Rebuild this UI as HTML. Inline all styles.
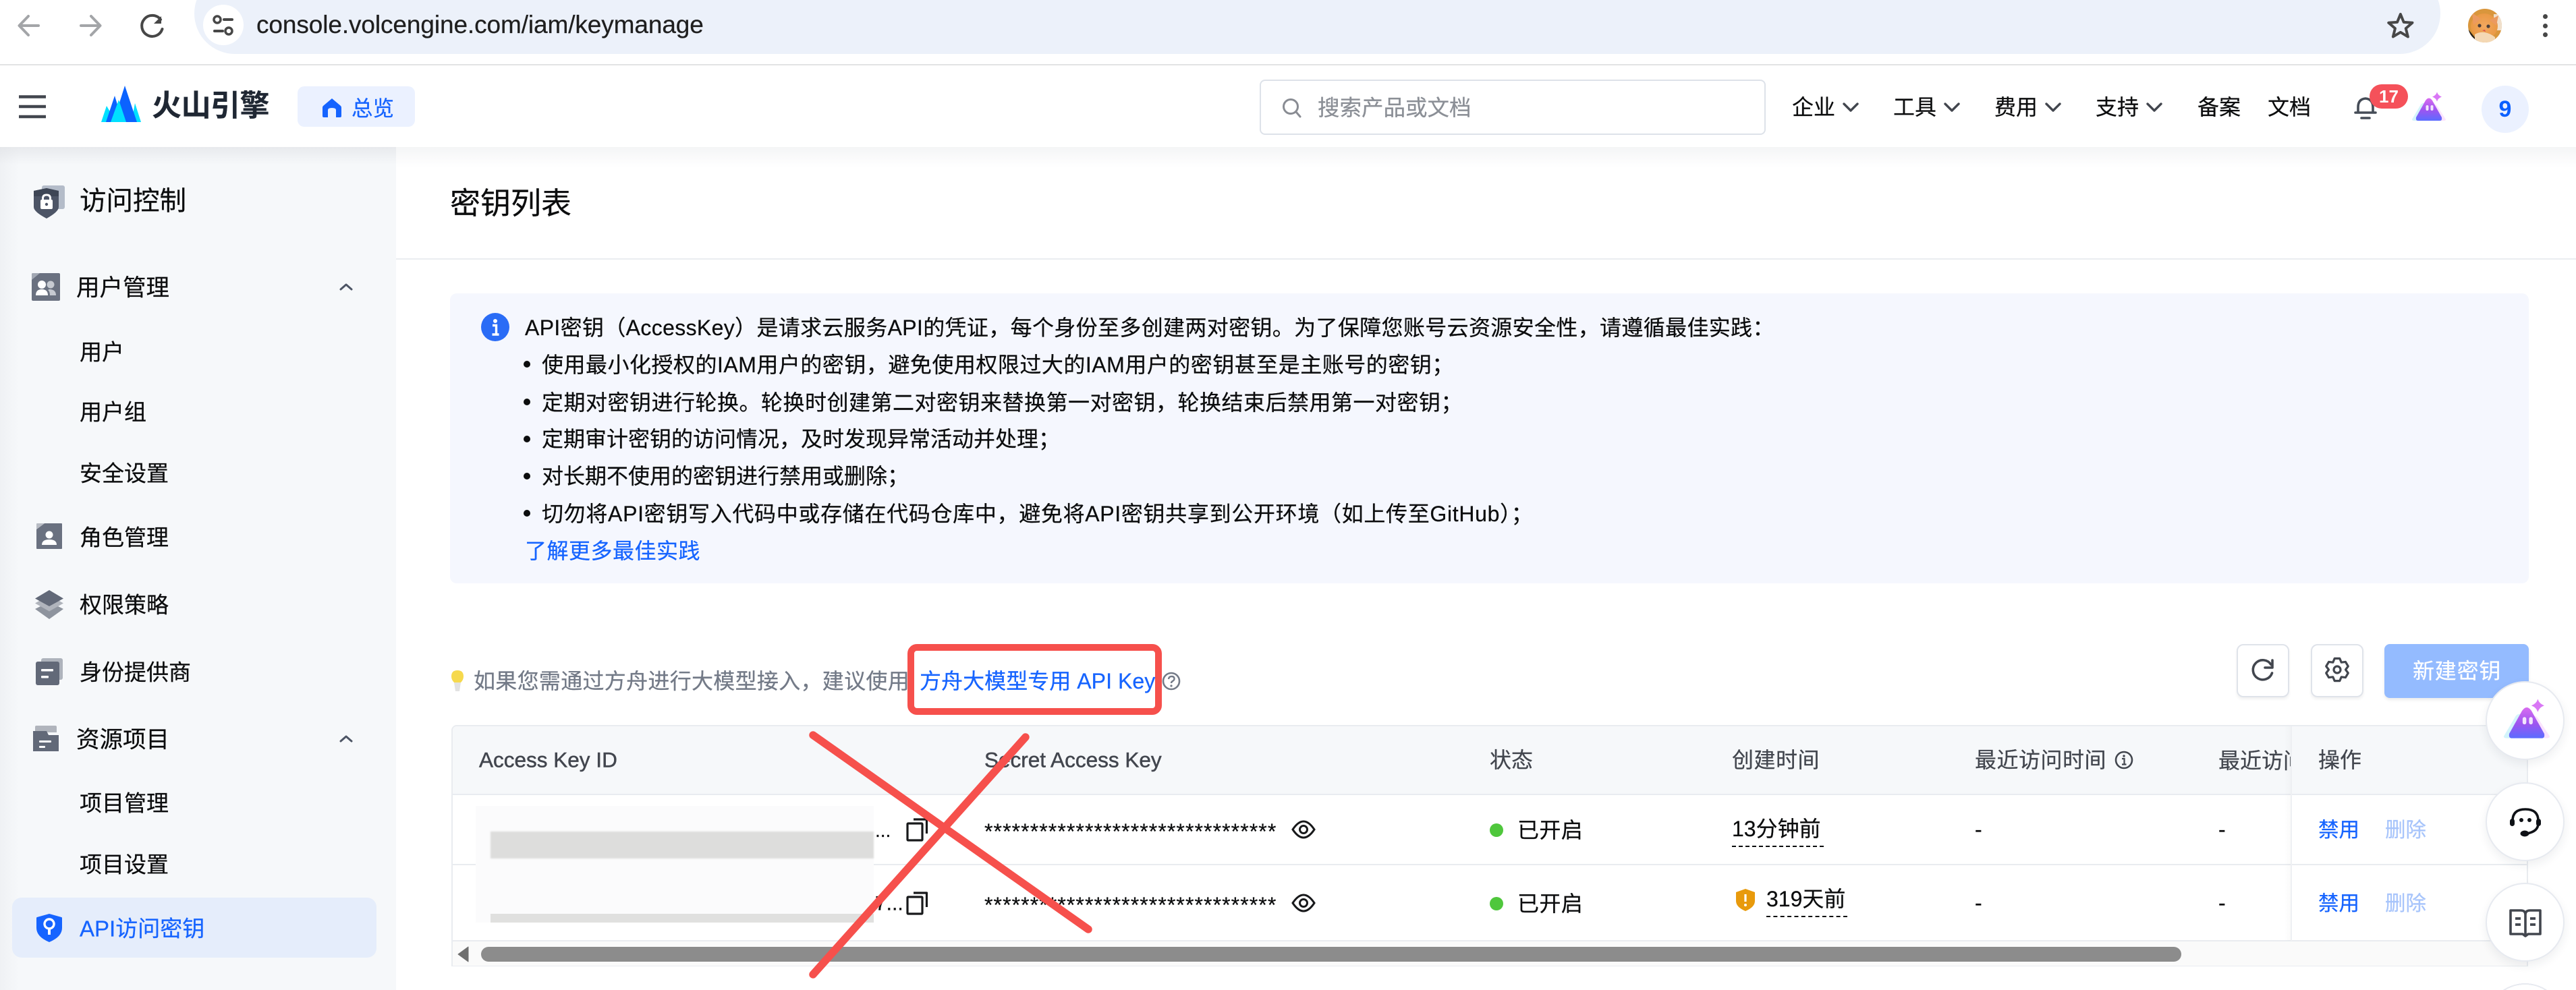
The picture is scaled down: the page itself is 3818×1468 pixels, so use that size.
<!DOCTYPE html>
<html lang="zh"><head><meta charset="utf-8"><title>密钥列表</title>
<style>
html,body{margin:0;padding:0;background:#fff;width:3818px;height:1468px;overflow:hidden}
#p{position:relative;width:3818px;height:1468px;overflow:hidden;background:#fff;font-family:"Liberation Sans","Noto Sans CJK SC",sans-serif;color:#0c0d0e}
.a{position:absolute}
.t{position:absolute;white-space:nowrap;transform:translateY(calc(-50% + 2px));line-height:1.3;-webkit-text-stroke:.25px currentColor}
.f32{font-size:32px}
svg{position:absolute;overflow:visible}
.b{color:#1664ff}
.g{color:#42464e}
.m{font-size:33px}
</style></head><body><div id="p">

<!-- browser bar -->
<div class="a" style="left:288px;top:-40px;width:3329px;height:120px;background:#ecf1fa;border-radius:60px"></div>
<div class="a" style="left:301px;top:7px;width:60px;height:60px;background:#fff;border-radius:50%"></div>
<svg style="left:0;top:0" width="400" height="80" fill="none" stroke-linecap="round" stroke-linejoin="round">
<path d="M57 38H29M42 24 28.500 38 42 52" stroke="#a3a5a8" stroke-width="4"/>
<path d="M120 38H148M135 24 148.500 38 135 52" stroke="#a3a5a8" stroke-width="4"/>
<path d="M238 29a15.500 15.500 0 1 0 2.500 14" stroke="#474747" stroke-width="4"/>
<path d="M239 24v11h-11z" fill="#474747"/>
<circle cx="322" cy="29" r="5" stroke="#474747" stroke-width="3.500"/><path d="M332 29h12M318 46h12" stroke="#474747" stroke-width="4"/><circle cx="339" cy="46" r="5" stroke="#474747" stroke-width="3.500"/>
</svg>
<div class="t" style="left:380px;top:35px;font-size:37px;color:#1f1f1f;letter-spacing:-.1px">console.volcengine.com/iam/keymanage</div>
<svg style="left:3536px;top:15px" width="44" height="44" fill="none"><path d="M22 4l5.500 13.500 14.500 1-11 9.500 3.500 14L22 34.500 9.500 42 13 28 2 18.500l14.500-1z" transform="translate(2.500 2.500) scale(.88)" stroke="#474747" stroke-width="4.500" stroke-linejoin="round"/></svg>
<svg style="left:3658px;top:13px" width="50" height="50" viewBox="0 0 50 50">
<defs><clipPath id="av"><circle cx="25" cy="25" r="25"/></clipPath><radialGradient id="cat" cx=".5" cy=".5" r=".6"><stop offset="0" stop-color="#f2a860"/><stop offset="1" stop-color="#e8963f"/></radialGradient></defs>
<g clip-path="url(#av)"><rect width="50" height="50" fill="#d9963c"/><rect x="38" y="8" width="12" height="24" fill="#f0e0cc"/><path d="M0 30l16 20H0z" fill="#252018"/><ellipse cx="24" cy="26" rx="20" ry="19" fill="url(#cat)"/><path d="M6 6l13 9-11 9zM45 10l-13 7 10 8z" fill="#eb9a60"/><path d="M10 38q14-8 30 4v10H10z" fill="#f4d8b4"/><circle cx="17" cy="25" r="2.600" fill="#4d3f3a"/><circle cx="30" cy="26" r="2.600" fill="#4d3f3a"/><path d="M21 32l4-1 1 3z" fill="#d8504a"/></g></svg>
<div class="a" style="left:3769px;top:20.500px;width:7px;height:7px;border-radius:50%;background:#474747"></div>
<div class="a" style="left:3769px;top:34.500px;width:7px;height:7px;border-radius:50%;background:#474747"></div>
<div class="a" style="left:3769px;top:48px;width:7px;height:7px;border-radius:50%;background:#474747"></div>
<div class="a" style="left:0;top:95px;width:3818px;height:2px;background:#e2e3e4"></div>

<!-- sidebar + main -->
<div class="a" style="left:0;top:218px;width:587px;height:1250px;background:linear-gradient(90deg,#eff1f4 0,#f6f8fa 28px)"></div>
<div class="a" style="left:587px;top:218px;width:3231px;height:30px;background:linear-gradient(#f4f5f6,#fff)"></div>
<div class="a" style="left:0;top:218px;width:587px;height:26px;background:linear-gradient(rgba(220,222,226,.55),rgba(246,248,250,0))"></div>

<!-- header -->
<svg style="left:28px;top:140px" width="40" height="36"><path d="M0 3.500h40M0 18h40M0 33h40" stroke="#42464e" stroke-width="4.400"/></svg>
<svg style="left:150px;top:128px" width="60" height="53" viewBox="0 0 60 53">
<path d="M0 53 8 29 22 53z" fill="#00e0ff"/><path d="M45 53 50 25 59 53z" fill="#00e0ff"/>
<path d="M7 53 20 14 32 53z" fill="#0b63ff"/><path d="M18 53 35 -1 53 53z" fill="#0b63ff"/>
<path d="M14 53 26 20 37 53z" fill="#00e0ff"/></svg>
<div class="t" style="left:225px;top:155px;font-size:44px;font-weight:700;color:#1f2733;letter-spacing:-.5px">火山引擎</div>
<div class="a" style="left:441px;top:128px;width:174px;height:60px;background:#ebf1ff;border-radius:10px"></div>
<svg style="left:478px;top:146px" width="28" height="28" viewBox="0 0 28 28"><path d="M14 0 27 11q1 1 1 3v12q0 2-2 2h-6V17q0-3-6-3t-6 3v11H2q-2 0-2-2V14q0-2 1-3z" fill="#1664ff"/></svg>
<div class="t b" style="left:521px;top:159px;font-size:31.500px">总览</div>

<div class="a" style="left:1867px;top:118px;width:746px;height:78px;border:2px solid #dde2e9;border-radius:8px;background:#fff"></div>
<svg style="left:1900px;top:144px" width="30" height="32" fill="none"><circle cx="13" cy="14" r="10.500" stroke="#898c93" stroke-width="3"/><path d="M21 22l6 7" stroke="#898c93" stroke-width="3" stroke-linecap="round"/></svg>
<div class="t" style="left:1953px;top:158px;font-size:32.500px;color:#8b8f96">搜索产品或文档</div>

<div class="t f32" style="left:2656px;top:158px;color:#0c0d0e">企业</div>
<div class="t f32" style="left:2806px;top:158px;color:#0c0d0e">工具</div>
<div class="t f32" style="left:2956px;top:158px;color:#0c0d0e">费用</div>
<div class="t f32" style="left:3106px;top:158px;color:#0c0d0e">支持</div>
<div class="t f32" style="left:3257px;top:158px;color:#0c0d0e">备案</div>
<div class="t f32" style="left:3361px;top:158px;color:#0c0d0e">文档</div>
<svg style="left:0;top:0" width="3400" height="200" fill="none" stroke="#42464e" stroke-width="3.400" stroke-linecap="round" stroke-linejoin="round"><path d="M2733 154l10 10 10-10M2883 154l10 10 10-10M3033 154l10 10 10-10M3183 154l10 10 10-10"/></svg>
<svg style="left:3489px;top:143px" width="34" height="36" fill="none" stroke="#454c57" stroke-linecap="round" stroke-width="3.600"><path d="M2 24h30M6 24V16Q6 4 17 3q11 1 11 13v8"/><path d="M11 32h12" stroke-width="3.600"/></svg>
<div class="a" style="left:3512px;top:125px;width:57px;height:36px;background:#f5515a;border-radius:18px;color:#fff;font-weight:700;font-size:26px;line-height:36px;text-align:center">17</div>

<svg style="left:3575px;top:136px" width="50" height="44" viewBox="0 0 50 44">
<defs><linearGradient id="pu" x1="0" y1="0" x2="0" y2="1"><stop offset="0" stop-color="#d86cf0"/><stop offset=".55" stop-color="#9b55f0"/><stop offset="1" stop-color="#5b6cff"/></linearGradient></defs>
<path d="M0 41 13 19q3-4 8-1L12 43H3q-3 0-3-2z" fill="#d3f4fb"/><path d="M50 41 37 21q-3-4-8-1l9 23h9q3 0 3-2z" fill="#fbe3fd"/>
<path d="M6 38 20 13q5-7 10 0l14 25q1 5-3 5H9q-4 0-3-5z" fill="url(#pu)"/>
<path d="M37 3.500q1.500 5 7 7-5.500 2-7 7-1.500-5-7-7 5.500-2 7-7z" fill="#d977f5" transform="translate(0 -3)"/>
<rect x="20.500" y="20" width="4" height="8" rx="2" fill="#fff" opacity=".85"/><rect x="27.500" y="20" width="4" height="8" rx="2" fill="#fff" opacity=".85"/></svg>
<div class="a" style="left:3678px;top:127px;width:70px;height:70px;border-radius:50%;background:#ebf1ff;color:#0b60ff;font-weight:700;font-size:34px;line-height:70px;text-align:center">9</div>

<!-- sidebar items -->
<svg style="left:50px;top:275px" width="46" height="49" viewBox="0 0 46 49">
<rect x="12" y="0" width="34" height="35" rx="3" fill="#b4bcc9"/>
<path d="M0 8 19 4l18 4v24q0 7-18 17Q0 39 0 32z" fill="#4d5566"/>
<path d="M19 4l18 4v8H0V8z" fill="#3e4655"/>
<rect x="10" y="21" width="18" height="14" rx="2" fill="#fff"/><path d="M13.500 21v-2q0-5 5.500-5t5.500 5v2" fill="none" stroke="#fff" stroke-width="3"/><circle cx="19" cy="28" r="2.200" fill="#4d5566"/></svg>
<div class="t" style="left:118px;top:297px;font-size:39.500px;color:#0c0d0e">访问控制</div>

<svg style="left:47px;top:405px" width="42" height="41" viewBox="0 0 42 41"><path d="M2 0h38q2 0 2 2v37q0 2-2 2H2q-2 0-2-2V2q0-2 2-2z" fill="#6a7180"/><path d="M0 2q0-2 2-2h10L0 10z" fill="#a2a8b3"/>
<circle cx="15" cy="17" r="6" fill="#fff"/><path d="M6 33q0-9 9-9t9 9z" fill="#fff"/><circle cx="28" cy="17" r="5.500" fill="#c6cad1"/><path d="M26 24q10 0 10 9h-9q0-6-3-8z" fill="#c6cad1"/></svg>
<div class="t m" style="left:113px;top:426px;font-size:34.500px">用户管理</div>
<svg style="left:503px;top:419px" width="20" height="14" fill="none"><path d="M2 10l8-7 8 7" stroke="#4d5565" stroke-width="3" stroke-linecap="round" stroke-linejoin="round"/></svg>
<div class="t m" style="left:118px;top:521px">用户</div>
<div class="t m" style="left:118px;top:610px">用户组</div>
<div class="t m" style="left:118px;top:701px">安全设置</div>

<svg style="left:54px;top:776px" width="38" height="38" viewBox="0 0 38 38"><path d="M12 0H37q1 0 1 1v36q0 1-1 1H1q-1 0-1-1V9z" fill="#6a7180"/><path d="M12 0H1Q0 0 0 1v8z" fill="#b8bcc4"/><circle cx="19" cy="17" r="5.500" fill="#fff"/><path d="M8 32q0-8 11-8t11 8z" fill="#fff"/></svg>
<div class="t m" style="left:118px;top:796px">角色管理</div>

<svg style="left:52px;top:875px" width="42" height="44" viewBox="0 0 42 44"><path d="M0 28l8-4 13 6 13-6 8 4-21 15z" fill="#8e949e"/><path d="M0 19.500l7-4 14 7 14-7 7 4-21 12z" fill="#b0b4bc"/><path d="M0 12.500 21 0l21 12.500L21 24z" fill="#626978"/></svg>
<div class="t m" style="left:118px;top:896px">权限策略</div>

<svg style="left:53px;top:976px" width="40" height="40" viewBox="0 0 40 40"><rect x="8" y="0" width="32" height="32" rx="3" fill="#aeb3bc"/><rect x="0" y="5" width="35" height="35" rx="3" fill="#626978" stroke="#f6f8fa" stroke-width="0"/><rect x="8" y="16" width="18" height="3.500" rx="1" fill="#fff"/><rect x="8" y="26" width="11" height="3.500" rx="1" fill="#fff"/></svg>
<div class="t m" style="left:118px;top:996px">身份提供商</div>

<svg style="left:49px;top:1076px" width="38" height="38" viewBox="0 0 38 38"><path d="M5 0h28q2 0 2 2v8H3V2q0-2 2-2z" fill="#b0b4bc"/><path d="M0 8H20l3 6h15v24H0z" fill="#626978"/><rect x="9" y="22" width="18" height="3" rx="1" fill="#fff"/><rect x="9" y="30" width="9" height="3" rx="1" fill="#fff"/></svg>
<div class="t m" style="left:113px;top:1096px;font-size:34.500px">资源项目</div>
<svg style="left:503px;top:1089px" width="20" height="14" fill="none"><path d="M2 10l8-7 8 7" stroke="#4d5565" stroke-width="3" stroke-linecap="round" stroke-linejoin="round"/></svg>
<div class="t m" style="left:118px;top:1190px">项目管理</div>
<div class="t m" style="left:118px;top:1281px">项目设置</div>

<div class="a" style="left:18px;top:1331px;width:540px;height:89px;background:#e5edfb;border-radius:14px"></div>
<svg style="left:54px;top:1355px" width="38" height="42" viewBox="0 0 38 42"><path d="M19 0 37 5q1 0 1 2v14q0 13-19 21Q0 34 0 21V7q0-2 1-2z" fill="#1664ff"/><circle cx="19" cy="15" r="7" fill="none" stroke="#fff" stroke-width="3.400"/><path d="M19 21v10" stroke="#fff" stroke-width="4"/></svg>
<div class="t b" style="left:118px;top:1376px;font-size:33px">API访问密钥</div>

<!-- title -->
<div class="t" style="left:667px;top:300px;font-size:45px;color:#0c0d0e">密钥列表</div>
<div class="a" style="left:587px;top:383px;width:3231px;height:2px;background:#eaedf1"></div>

<!-- notice -->
<div class="a" style="left:667px;top:435px;width:3081px;height:430px;background:#f5f7fe;border-radius:10px"></div>
<svg style="left:713px;top:464px" width="42" height="42" viewBox="0 0 42 42"><circle cx="21" cy="21" r="21" fill="#2a6cf6"/><circle cx="21" cy="12" r="3" fill="#fff"/><path d="M17 18.500h5.500V31M16.500 32h10" stroke="#fff" stroke-width="3.400" fill="none"/></svg>
<div class="t f32" style="left:778px;top:485px;color:#0c0d0e;letter-spacing:.35px">API密钥（AccessKey）是请求云服务API的凭证，每个身份至多创建两对密钥。为了保障您账号云资源安全性，请遵循最佳实践：</div>
<div class="a" style="left:776px;top:535px;width:10px;height:10px;border-radius:50%;background:#0c0d0e"></div>
<div class="t f32" style="left:803px;top:540px;letter-spacing:.5px">使用最小化授权的IAM用户的密钥，避免使用权限过大的IAM用户的密钥甚至是主账号的密钥；</div>
<div class="a" style="left:776px;top:591px;width:10px;height:10px;border-radius:50%;background:#0c0d0e"></div>
<div class="t f32" style="left:803px;top:596px;letter-spacing:.5px">定期对密钥进行轮换。轮换时创建第二对密钥来替换第一对密钥，轮换结束后禁用第一对密钥；</div>
<div class="a" style="left:776px;top:646px;width:10px;height:10px;border-radius:50%;background:#0c0d0e"></div>
<div class="t f32" style="left:803px;top:650px">定期审计密钥的访问情况，及时发现异常活动并处理；</div>
<div class="a" style="left:776px;top:701px;width:10px;height:10px;border-radius:50%;background:#0c0d0e"></div>
<div class="t f32" style="left:803px;top:705px">对长期不使用的密钥进行禁用或删除；</div>
<div class="a" style="left:776px;top:756px;width:10px;height:10px;border-radius:50%;background:#0c0d0e"></div>
<div class="t f32" style="left:803px;top:761px;letter-spacing:.68px">切勿将API密钥写入代码中或存储在代码仓库中，避免将API密钥共享到公开环境（如上传至GitHub）；</div>
<div class="t f32 b" style="left:778px;top:816px;letter-spacing:.5px">了解更多最佳实践</div>

<!-- hint row -->
<svg style="left:668px;top:994px" width="20" height="32" viewBox="0 0 20 32"><path d="M10 0q9 0 9 9 0 5-4 9H5Q1 14 1 9q0-9 9-9z" fill="#f6d94d"/><path d="M5 18h10l-2 13H7z" fill="#e2e2e2"/></svg>
<div class="t f32" style="left:702px;top:1009px;color:#737a87;letter-spacing:.3px">如果您需通过方舟进行大模型接入，建议使用</div>
<div class="t f32 b" style="left:1363px;top:1009px;letter-spacing:.05px">方舟大模型专用 API Key</div>
<svg style="left:1722px;top:996px" width="28" height="28" fill="none"><circle cx="14" cy="14" r="12" stroke="#737a87" stroke-width="2.600"/><path d="M10 11q.5-4 4.500-4t4 3.500q0 2-2.500 3.500-2 1-2 3" stroke="#737a87" stroke-width="2.400"/><circle cx="14" cy="21" r="1.600" fill="#737a87"/></svg>

<!-- buttons -->
<div class="a" style="left:3315px;top:955px;width:74px;height:75px;border:2px solid #dfe3ea;border-radius:10px;background:#fff;box-shadow:0 3px 4px rgba(0,0,0,.06)"></div>
<svg style="left:3335px;top:978px" width="36" height="34" fill="none" stroke="#42464e" stroke-width="3.600" stroke-linecap="round" stroke-linejoin="round"><path d="M31 7.500A14.500 14.500 0 1 0 32.500 20"/><path d="M33 1v11H22"/></svg>
<div class="a" style="left:3425px;top:955px;width:74px;height:75px;border:2px solid #dfe3ea;border-radius:10px;background:#fff;box-shadow:0 3px 4px rgba(0,0,0,.06)"></div>
<svg style="left:3446px;top:975px" width="36" height="36" viewBox="0 0 36 36" fill="none" stroke="#42464e" stroke-width="3.200" stroke-linejoin="round"><path d="M21.800 1.400L24.250 7.200 30.400 6.400 34.300 13 30.500 18 34.300 23 30.400 29.600 24.250 28.800 21.800 34.600H14.200L11.750 28.800 5.600 29.600 1.700 23 5.500 18 1.700 13 5.600 6.400 11.750 7.200 14.200 1.400Z"/><circle cx="18" cy="18" r="5"/></svg>
<div class="a" style="left:3534px;top:955px;width:214px;height:80px;background:#94bbff;border-radius:8px;box-shadow:0 3px 4px rgba(0,0,0,.08)"></div>
<div class="t f32" style="left:3576px;top:994px;color:#fff;letter-spacing:.8px">新建密钥</div>

<!-- table -->
<div class="a" style="left:669px;top:1075px;width:3078px;height:358px;border:2px solid #e9ecf0;border-bottom:2px solid #e9ecf0;box-sizing:border-box;border-radius:8px 8px 0 0"></div>
<div class="a" style="left:671px;top:1077px;width:3074px;height:100px;background:#f6f8fa;border-radius:6px 6px 0 0"></div>
<div class="a" style="left:671px;top:1177px;width:3074px;height:2px;background:#e9ecf0"></div>
<div class="a" style="left:671px;top:1281px;width:3074px;height:2px;background:#e9ecf0"></div>
<div class="a" style="left:671px;top:1394px;width:3074px;height:2px;background:#e9ecf0"></div>
<div class="a" style="left:671px;top:1396px;width:3074px;height:36px;background:#fafafa"></div>
<div class="a" style="left:3385px;top:1077px;width:10px;height:318px;background:linear-gradient(90deg,rgba(0,0,0,0),rgba(0,0,0,.02))"></div>
<div class="a" style="left:3395px;top:1077px;width:2px;height:318px;background:#eef0f3"></div>

<div class="t f32 g" style="left:710px;top:1125px;font-size:31.500px;-webkit-text-stroke:.5px #42464e">Access Key ID</div>
<div class="t f32 g" style="left:1459px;top:1125px;font-size:31.500px;-webkit-text-stroke:.5px #42464e">Secret Access Key</div>
<div class="t f32 g" style="left:2208px;top:1126px">状态</div>
<div class="t f32 g" style="left:2567px;top:1126px;letter-spacing:.5px">创建时间</div>
<div class="t f32 g" style="left:2927px;top:1126px;letter-spacing:.5px">最近访问时间</div>
<svg style="left:3134px;top:1113px" width="28" height="28" fill="none"><circle cx="14" cy="14" r="12" stroke="#42464e" stroke-width="2.600"/><path d="M11 12h3.500v8M11 20.500h6.500" stroke="#42464e" stroke-width="2.200"/><circle cx="14" cy="8" r="1.700" fill="#42464e"/></svg>
<div class="a" style="left:3288px;top:1101px;width:107px;height:54px;overflow:hidden"><div class="f32 g" style="white-space:nowrap;line-height:54px;-webkit-text-stroke:.25px #42464e">最近访问时间</div></div>
<div class="t f32 g" style="left:3436px;top:1126px">操作</div>

<!-- blurred id -->
<div class="a" style="left:705px;top:1195px;width:590px;height:173px;background:#fbfbfc"></div>
<div class="a" style="left:727px;top:1233px;width:568px;height:40px;background:#dddddc;filter:blur(1px)"></div>
<div class="a" style="left:705px;top:1282px;width:590px;height:2px;background:#fbfbfc"></div>
<div class="a" style="left:727px;top:1355px;width:568px;height:13px;background:#e0e0df"></div>
<div class="t" style="left:1297px;top:1230px;font-size:28px;color:#0c0d0e">...</div>
<div class="t" style="left:1297px;top:1338px;font-size:30px;color:#0c0d0e">7...</div>

<svg style="left:1343px;top:1213px" width="34" height="36" fill="none" stroke="#18191b" stroke-width="3.200" stroke-linejoin="round"><rect x="2" y="8" width="22" height="25" rx="1"/><path d="M11 2h19.500v21"/></svg>
<svg style="left:1343px;top:1322px" width="34" height="36" fill="none" stroke="#18191b" stroke-width="3.200" stroke-linejoin="round"><rect x="2" y="8" width="22" height="25" rx="1"/><path d="M11 2h19.500v21"/></svg>

<div class="t" style="left:1459px;top:1232px;font-size:32px;letter-spacing:1.090px;color:#0c0d0e">********************************</div>
<div class="t" style="left:1459px;top:1341px;font-size:32px;letter-spacing:1.090px;color:#0c0d0e">********************************</div>
<svg style="left:1914px;top:1216px" width="36" height="28" fill="none" stroke="#18191b" stroke-width="3"><path d="M2 14Q10 2 18 2t16 12Q26 26 18 26T2 14z"/><circle cx="18" cy="14" r="5.500"/></svg>
<svg style="left:1914px;top:1325px" width="36" height="28" fill="none" stroke="#18191b" stroke-width="3"><path d="M2 14Q10 2 18 2t16 12Q26 26 18 26T2 14z"/><circle cx="18" cy="14" r="5.500"/></svg>

<div class="a" style="left:2208px;top:1221px;width:20px;height:20px;border-radius:50%;background:#4fc73c"></div>
<div class="t f32" style="left:2249px;top:1230px;letter-spacing:.4px">已开启</div>
<div class="a" style="left:2208px;top:1330px;width:20px;height:20px;border-radius:50%;background:#4fc73c"></div>
<div class="t f32" style="left:2249px;top:1339px;letter-spacing:.4px">已开启</div>

<div class="t f32" style="left:2567px;top:1228px">13分钟前</div>
<div class="a" style="left:2567px;top:1254px;width:136px;height:0;border-top:2.500px dashed #0c0d0e"></div>
<svg style="left:2572px;top:1318px" width="30" height="33" viewBox="0 0 30 33"><path d="M15 0 29 5v13q0 9-14 15Q1 27 1 18V5z" fill="#e89a0c"/><path d="M15 8v11" stroke="#fff" stroke-width="3.200"/><circle cx="15" cy="24" r="2" fill="#fff"/></svg>
<div class="t f32" style="left:2618px;top:1332px">319天前</div>
<div class="a" style="left:2618px;top:1358px;width:120px;height:0;border-top:2.500px dashed #0c0d0e"></div>

<div class="t f32" style="left:2927px;top:1229px">-</div>
<div class="t f32" style="left:3288px;top:1229px">-</div>
<div class="t f32" style="left:2927px;top:1338px">-</div>
<div class="t f32" style="left:3288px;top:1338px">-</div>

<div class="t b" style="left:3436px;top:1230px;font-size:30.500px">禁用</div>
<div class="t" style="left:3535px;top:1230px;font-size:30.500px;color:#a8c5fb">删除</div>
<div class="t b" style="left:3436px;top:1339px;font-size:30.500px">禁用</div>
<div class="t" style="left:3535px;top:1339px;font-size:30.500px;color:#a8c5fb">删除</div>

<!-- scrollbar -->
<svg style="left:678px;top:1404px" width="18" height="22"><path d="M16 0v22L1 11z" fill="#6f6f6f" stroke="#6f6f6f" stroke-linejoin="round"/></svg>
<div class="a" style="left:713px;top:1404px;width:2520px;height:22px;background:#8c8c8c;border-radius:11px"></div>

<!-- red annotations -->
<svg style="left:0;top:0" width="3818" height="1468" fill="none" stroke="#f6504c" stroke-linecap="round">
<rect x="1350" y="960" width="367" height="95" rx="9" stroke-width="10"/>
<path d="M1205 1090 1613 1378M1520 1093 1205 1445" stroke-width="11.500"/>
</svg>

<!-- floating buttons -->
<div class="a" style="left:3684px;top:1010px;width:117px;height:117px;box-sizing:border-box;border-radius:50%;background:#fff;border:2px solid #e7eaf0;box-shadow:0 6px 14px rgba(30,40,60,.07)"></div>
<svg style="left:3710px;top:1036px" width="70" height="60" viewBox="0 0 50 44">
<path d="M0 41 13 19q3-4 8-1L12 43H3q-3 0-3-2z" fill="#d3f4fb"/><path d="M50 41 37 21q-3-4-8-1l9 23h9q3 0 3-2z" fill="#fbe3fd"/>
<path d="M6 38 20 13q5-7 10 0l14 25q1 5-3 5H9q-4 0-3-5z" fill="url(#pu)"/>
<path d="M37 3.500q1.500 5 7 7-5.500 2-7 7-1.500-5-7-7 5.500-2 7-7z" fill="#d977f5" transform="translate(0 -3)"/>
<rect x="20.500" y="20" width="4" height="8" rx="2" fill="#fff" opacity=".85"/><rect x="27.500" y="20" width="4" height="8" rx="2" fill="#fff" opacity=".85"/></svg>

<div class="a" style="left:3684px;top:1160px;width:117px;height:117px;box-sizing:border-box;border-radius:50%;background:#fff;border:2px solid #e7eaf0;box-shadow:0 6px 14px rgba(30,40,60,.07)"></div>
<svg style="left:3720px;top:1197px" width="46" height="44" viewBox="0 0 46 44" fill="none"><path d="M4 22V20Q4 3 23 3t19 17v4q0 12-17 15" stroke="#0e1116" stroke-width="3.600"/><rect x="0" y="17" width="7" height="11" rx="3.500" fill="#0e1116"/><rect x="39" y="17" width="7" height="11" rx="3.500" fill="#0e1116"/><ellipse cx="22" cy="39" rx="6.500" ry="4.500" fill="#0e1116"/><circle cx="17" cy="19" r="3" fill="#0e1116"/><circle cx="29" cy="19" r="3" fill="#0e1116"/></svg>

<div class="a" style="left:3684px;top:1309px;width:117px;height:117px;box-sizing:border-box;border-radius:50%;background:#fff;border:2px solid #e7eaf0;box-shadow:0 6px 14px rgba(30,40,60,.07)"></div>
<svg style="left:3719px;top:1348px" width="48" height="42" viewBox="0 0 48 42" fill="none" stroke="#42464e" stroke-width="3.600" stroke-linejoin="round"><path d="M2 2H17Q24 2 24 8V40L20 37H2zM46 2H31Q24 2 24 8V40L28 37H46z"/><path d="M9 14h8M9 23h8M31 14h8M31 23h8" stroke-width="3.800"/></svg>

<div class="a" style="left:3684px;top:1458px;width:117px;height:10px;background:radial-gradient(circle at 58.500px 58.500px,#fff 56.500px,#e7eaf0 56.500px,#e7eaf0 58.500px,rgba(255,255,255,0) 58.500px)"></div>

</div></body></html>
